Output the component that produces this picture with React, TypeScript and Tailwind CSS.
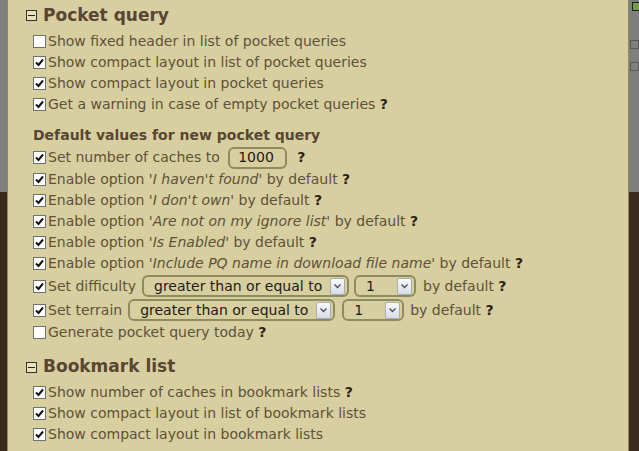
import React from 'react';

const font = { fontFamily: '"DejaVu Sans", Verdana, sans-serif' };

function Check({ on }: { on: boolean }) {
  return (
    <span className="flex h-[13px] w-[13px] shrink-0 items-center justify-center border border-[#707070] bg-white">
      {on && (
        <svg width="9" height="9" viewBox="0 0 9 9">
          <path d="M1 4.5 L3.5 7 L8 1.5" stroke="#111" strokeWidth="2" fill="none" />
        </svg>
      )}
    </span>
  );
}

function Q() {
  return <b className="font-bold text-[#2a2218]">?</b>;
}

function Row({ on = true, h = 'h-[21px]', children }: { on?: boolean; h?: string; children: React.ReactNode }) {
  return (
    <div className={`flex items-center pl-[25px] ${h}`}>
      <Check on={on} />
      <div className="ml-[2px] flex items-center whitespace-pre">{children}</div>
    </div>
  );
}

function Heading({ title, cls }: { title: string; cls: string }) {
  return (
    <div className={`flex items-center pl-[18px] ${cls}`}>
      <span className="flex h-[11px] w-[11px] items-center justify-center border border-[#333] bg-[#e8e2c0]">
        <span className="h-px w-[7px] bg-[#222]" />
      </span>
      <span className="ml-[6px] text-[17px] font-bold text-[#574633]">{title}</span>
    </div>
  );
}

function Select({ value, w }: { value: string; w: string }) {
  return (
    <div className={`flex h-[22px] items-center justify-between rounded-[6px] border-2 border-[#8d8c5c] pl-[10px] pr-[2px] text-[#1e1a14] ${w}`}>
      <span>{value}</span>
      <span className="flex h-[17px] w-[15px] items-center justify-center rounded-[2px] border border-[#a8adb5] bg-gradient-to-b from-[#f8f9fb] to-[#d8dde6]">
        <svg width="7" height="5" viewBox="0 0 7 5">
          <path d="M0.5 0.5 L3.5 3.5 L6.5 0.5" stroke="#4a5060" strokeWidth="1.4" fill="none" />
        </svg>
      </span>
    </div>
  );
}

export default function App() {
  return (
    <div className="relative h-[451px] w-[639px] overflow-hidden" style={font}>
      <div className="flex h-full flex-col">
        <div className="h-[192px] bg-[#7f7f7f]" />
        <div className="flex-1 bg-[#3a2a1b]" />
      </div>

      {/* bits of the page behind the dialog */}
      <div className="absolute left-[632px] top-[2px] h-[9px] w-[8px] border border-[#1a2a10] bg-[#7d9a4a]" />
      <div className="absolute left-[630px] top-[40px] h-[9px] w-[9px] border border-[#5a5a5a]" />
      <div className="absolute left-[630px] top-[62px] h-[9px] w-[9px] border border-[#5a5a5a]" />

      <div className="absolute left-[7px] top-0 h-[451px] w-[622px] border-x border-[#8f8d5e] bg-[#d8cfa0] text-[14px] text-[#5e5139]">
        <Heading title="Pocket query" cls="h-[31px]" />
        <Row on={false}>Show fixed header in list of pocket queries</Row>
        <Row>Show compact layout in list of pocket queries</Row>
        <Row>Show compact layout in pocket queries</Row>
        <Row>
          Get a warning in case of empty pocket queries <Q />
        </Row>

        <div className="mt-[10px] flex h-[21px] items-center pl-[25px] font-bold text-[#574633]">
          Default values for new pocket query
        </div>
        <Row h="h-[23px]">
          Set number of caches to{' '}
          <span className="ml-[4px] flex h-[22px] w-[59px] items-center rounded-[6px] border-2 border-[#8d8c5c] pl-[8px] text-[#1e1a14]">
            1000
          </span>
          <span className="ml-[10px]" />
          <Q />
        </Row>
        <Row>
          Enable option '<i>I haven't found</i>' by default <Q />
        </Row>
        <Row>
          Enable option '<i>I don't own</i>' by default <Q />
        </Row>
        <Row>
          Enable option '<i>Are not on my ignore list</i>' by default <Q />
        </Row>
        <Row>
          Enable option '<i>Is Enabled</i>' by default <Q />
        </Row>
        <Row>
          Enable option '<i>Include PQ name in download file name</i>' by default <Q />
        </Row>
        <Row h="h-[24px]">
          Set difficulty
          <span className="ml-[6px]" />
          <Select value="greater than or equal to" w="w-[207px]" />
          <span className="ml-[5px]" />
          <Select value="1" w="w-[62px]" />
          <span className="ml-[7px]">by default </span>
          <Q />
        </Row>
        <Row h="h-[24px]">
          Set terrain
          <span className="ml-[6px]" />
          <Select value="greater than or equal to" w="w-[207px]" />
          <span className="ml-[7px]" />
          <Select value="1" w="w-[62px]" />
          <span className="ml-[6px]">by default </span>
          <Q />
        </Row>
        <Row on={false}>
          Generate pocket query today <Q />
        </Row>

        <Heading title="Bookmark list" cls="mt-[9px] h-[30px]" />
        <Row>
          Show number of caches in bookmark lists <Q />
        </Row>
        <Row>Show compact layout in list of bookmark lists</Row>
        <Row>Show compact layout in bookmark lists</Row>
      </div>
    </div>
  );
}
